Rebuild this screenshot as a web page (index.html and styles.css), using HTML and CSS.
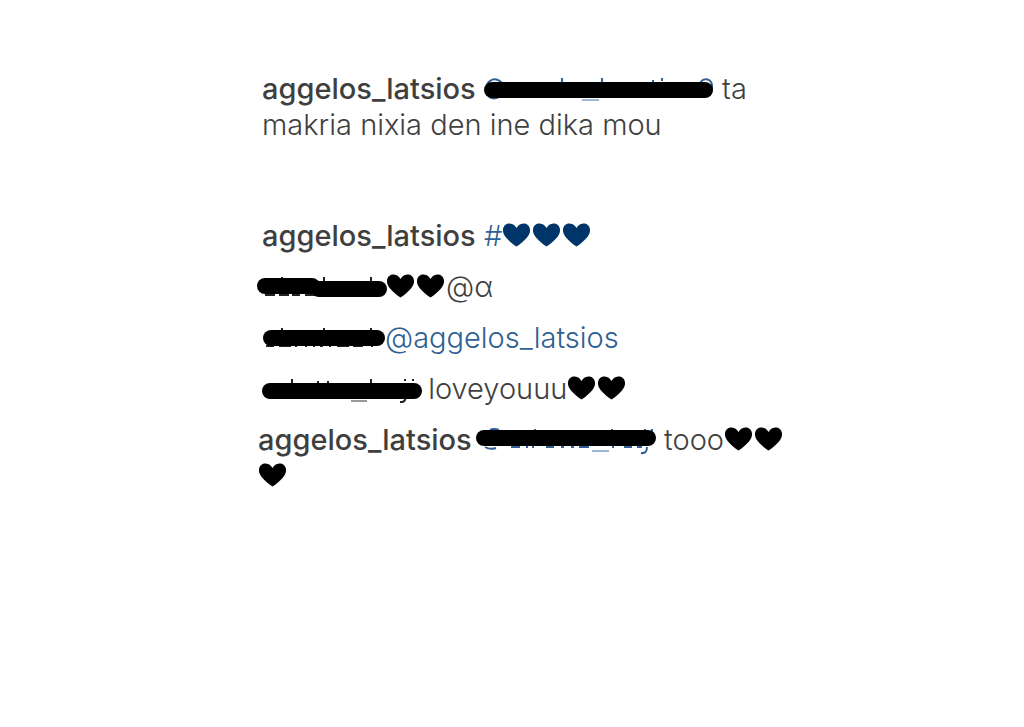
FILE: index.html
```html
<!DOCTYPE html>
<html lang="el">
<head>
  <meta charset="UTF-8" />
  <title>Comments</title>
  <link rel="stylesheet" href="styles.css">
</head>
<body>
  <!-- heart shape, reused by every comment -->
  <svg class="defs" aria-hidden="true">
    <symbol id="heart" viewBox="0 0 30 24">
      <path d="M14.500 23.500C11 21.500 7 18 4 14.500C1.500 11.500 .8 9 1 6.500C1.500 2.500 4.500 .5 7.800 .6C10.800 .7 13 2.500 14.500 5C16 2.500 18.200 .7 21.200 .6C24.500 .5 27.500 2.500 28 6.500C28.200 9 27.500 11.500 25 14.500C22 18 18 21.500 14.500 23.500Z"/>
    </symbol>
  </svg>

  <main class="comments">
    <p class="comment caption"><b>aggelos_latsios</b>
      <svg class="redacted" width="230" height="29" viewBox="0 0 230 29" aria-hidden="true">
        <g class="ink-blue"><path d="M3 7Q10-2 18 6M5 20Q10 23 15 20M78 1v5M118 1v5M168 4h2M178 1v3M216 8C216 0 229 0 228 10Q228 15 226 18"/></g>
        <path class="ink-light" d="M98 23h17"/>
        <path class="bar" d="M8 13H221"/>
      </svg>
      <span>ta</span> <span>makria nixia den ine dika mou</span></p>

    <p class="comment"><b>aggelos_latsios</b> <span class="link">#<svg class="heart"><use href="#heart"/></svg><svg class="heart"><use href="#heart"/></svg><svg class="heart"><use href="#heart"/></svg></span></p>

    <p class="comment outdent"><svg class="redacted" width="128" height="29" viewBox="0 0 128 29" aria-hidden="true">
        <path class="ink" d="M24 2v3M66 2v4M113 2v4M7 20h10M21 20h10M34 20h8M47 20h12"/>
        <path class="bar" d="M7 11H54"/>
        <path class="bar" d="M61 14H121"/>
      </svg><svg class="heart"><use href="#heart"/></svg><svg class="heart"><use href="#heart"/></svg>@α</p>

    <p class="comment"><svg class="redacted" width="123" height="29" viewBox="0 0 123 29" aria-hidden="true">
        <path class="ink" d="M20 2v3M62 2v3M109 2v3M4 20h8M17 20h12M33 20h2M43 20h2M51 20h2M58 20h3M67 20h2M75 20h12M91 20h10M109 20h2"/>
        <path class="bar" d="M9 12H115"/>
      </svg><a class="link" href="#">@aggelos_latsios</a></p>

    <p class="comment"><svg class="redacted" width="158" height="29" viewBox="0 0 158 29" aria-hidden="true">
        <path class="ink" d="M30 2v4M56 4v2M66 4v2M109 2v4M143 2v2M151 2v2M144 18Q144 26 138 25"/>
        <path class="ink-gray" d="M89 24h16"/>
        <path class="bar" d="M8 14H152"/>
      </svg> loveyouuu<svg class="heart"><use href="#heart"/></svg><svg class="heart"><use href="#heart"/></svg></p>

    <p class="comment outdent"><b>aggelos_latsios</b>
      <svg class="redacted" width="176" height="29" viewBox="4 0 176 29" aria-hidden="true">
        <g class="ink-blue"><path d="M14 2Q18 0 23 2M59 1v3M93 2v3M102 2v3M136 1v3M169 1v3M176 1v3M9 19Q14 22 20 20M35 19h9M50 19h2M56 19h2M70 19h8M85 19h3M95 19h3M103 19h10M136 19h2M148 19h8M161 19h5M171 19Q171 26 165 25"/></g>
        <path class="ink-light" d="M116 23h17"/>
        <path class="bar" d="M8 10H172"/>
      </svg>
      tooo<svg class="heart"><use href="#heart"/></svg><svg class="heart"><use href="#heart"/></svg><wbr><svg class="heart"><use href="#heart"/></svg></p>
  </main>
</body>
</html>
```

FILE: styles.css
```css
body {
  margin: 0;
  background: #fff;
  color: #3f3f3f;
  font-family: Inter, "Noto Sans", sans-serif;
  font-size: 29px;
  font-weight: 300;
  line-height: 36px;
}
.defs {
  position: absolute;
  width: 0;
  height: 0;
}
.comments {
  box-sizing: border-box;
  max-width: 560px;
  margin: 0 auto;
  padding: 71px 0 0 30px;
}
.comment {
  margin: 0 0 15px;
}
.caption {
  margin-bottom: 75px;
}
.outdent {
  margin-left: -4px;
}
.comment b {
  font-weight: 500;
}
.link {
  color: #2f5f93;
  text-decoration: none;
}
.heart {
  width: 30px;
  height: 24px;
  vertical-align: -1px;
  fill: #000;
}
.link .heart {
  fill: #003569;
}
/* blacked-out names */
.redacted {
  overflow: visible;
  vertical-align: -7px;
  fill: none;
}
.bar {
  stroke: #000;
  stroke-width: 16px;
  stroke-linecap: round;
}
.ink, .ink-blue, .ink-gray, .ink-light {
  stroke: #222;
  stroke-width: 2px;
}
.ink-blue {
  stroke: #2f5f93;
}
.ink-gray {
  stroke: #999;
}
.ink-light {
  stroke: #9db8d4;
}
```
